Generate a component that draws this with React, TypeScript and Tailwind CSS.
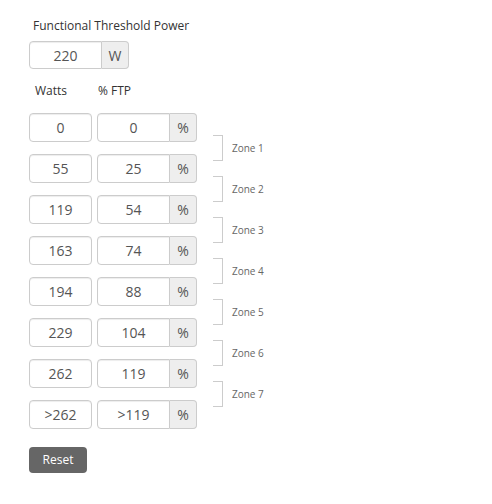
const ROWS = [
  { watts: "0", ftp: "0" },
  { watts: "55", ftp: "25" },
  { watts: "119", ftp: "54" },
  { watts: "163", ftp: "74" },
  { watts: "194", ftp: "88" },
  { watts: "229", ftp: "104" },
  { watts: "262", ftp: "119" },
  { watts: ">262", ftp: ">119" },
];

const ZONES = ["Zone 1", "Zone 2", "Zone 3", "Zone 4", "Zone 5", "Zone 6", "Zone 7"];

function Box({ value, className }: { value: string; className: string }) {
  return (
    <div
      className={`flex items-center justify-center border border-[#ccc] bg-white text-[14px] text-[#555] shadow-[inset_0_1px_1px_rgba(0,0,0,0.075)] ${className}`}
    >
      {value}
    </div>
  );
}

function Addon({ label }: { label: string }) {
  return (
    <div className="flex w-[27px] items-center justify-center rounded-r-[4px] border border-l-0 border-[#ccc] bg-[#eee] text-[14px] text-[#555]">
      {label}
    </div>
  );
}

export default function App() {
  return (
    <div className="h-[504px] w-[492px] bg-white pl-[29px] pt-[17px] font-['Open_Sans',sans-serif] text-[#333]">
      <div className="pl-[4px] text-[12px] leading-[18px]">Functional Threshold Power</div>

      <div className="mt-[6px] flex h-[28px] w-[100px]">
        <Box value="220" className="w-[73px] rounded-l-[4px]" />
        <Addon label="W" />
      </div>

      <div className="mt-[13px] flex text-[12px] leading-[17px]">
        <span className="w-[63px] pl-[6px]">Watts</span>
        <span className="pl-[6px]">% FTP</span>
      </div>

      <div className="mt-[14px] flex">
        <div className="flex flex-col gap-[12px]">
          {ROWS.map((r) => (
            <div key={r.watts} className="flex h-[29px] gap-[5px]">
              <Box value={r.watts} className="w-[63px] rounded-[4px]" />
              <div className="flex">
                <Box value={r.ftp} className="w-[73px] rounded-l-[4px]" />
                <Addon label="%" />
              </div>
            </div>
          ))}
        </div>

        <div className="ml-[16px] mt-[22px] flex flex-col gap-[15px]">
          {ZONES.map((z) => (
            <div key={z} className="flex h-[26px] items-center">
              <div className="h-full w-[10px] border-y border-r border-[#ccc]" />
              <span className="ml-[9px] text-[10px] text-[#666]">{z}</span>
            </div>
          ))}
        </div>
      </div>

      <button className="mt-[18px] h-[26px] w-[58px] rounded-[4px] bg-[#666] text-[12px] text-white">
        Reset
      </button>
    </div>
  );
}
